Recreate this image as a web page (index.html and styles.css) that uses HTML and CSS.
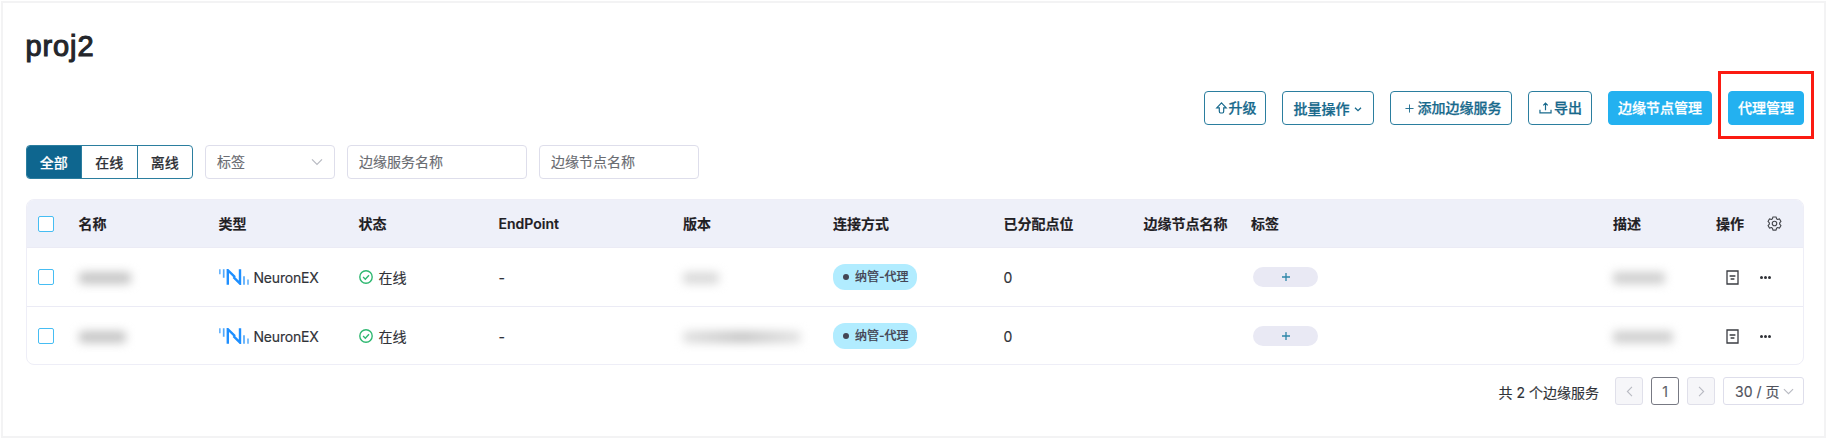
FILE: index.html
```html
<!DOCTYPE html>
<html lang="zh-CN">
<head>
<meta charset="utf-8">
<title>proj2</title>
<link rel="stylesheet" href="styles.css">
</head>
<body>
<svg class="defs" width="0" height="0">
  <symbol id="chevron" viewBox="0 0 12 12"><path d="M1 3.300l5 5 5-5" fill="none" stroke="currentColor" stroke-width="1.200"/></symbol>
  <symbol id="neuron" viewBox="0 0 30 16">
    <g fill="none" stroke-width="1.700">
      <path d="M.8.3v4.900" stroke="#6bb5fb"/><path d="M4.700.3v8.500" stroke="#52a9fb"/>
      <path d="M25 7.200v8.500" stroke="#52a9fb"/><path d="M29 10.600v5.100" stroke="#6bb5fb"/>
      <path d="M8.800 15.700V1.200l7.200 7" stroke="#1e8fff" stroke-width="2.400"/>
      <path d="M21 .3v14.300l-6.500-6.400" stroke="#1e8fff" stroke-width="2.400"/>
    </g>
  </symbol>
  <symbol id="check" viewBox="0 0 14 14"><g fill="none" stroke="#2fb871" stroke-width="1.400"><circle cx="7" cy="7" r="6.200"/><path d="M4.100 7.100l2.200 2.100 3.700-4"/></g></symbol>
  <symbol id="doc" viewBox="0 0 13 15"><path d="M1 1h11v13H1zM3.600 6h5.800M4.600 9h3.800" fill="none" stroke="#3a3c42" stroke-width="1.300"/></symbol>
</svg>
<main class="page">
  <h1 class="title">proj2</h1>
  <div class="toolbar">
    <button class="btn upgrade"><svg class="i-up" viewBox="0 0 11 12"><path d="M5.500.8L10.200 5.800H7.700v3.500q0 1.700-1.200 1.700h-2q-1.200 0-1.200-1.700V5.800H.8z" fill="none" stroke="currentColor" stroke-width="1.200"/></svg>升级</button>
    <button class="btn low">批量操作<svg class="i-down" viewBox="0 0 12 12"><path d="M3 4.800L6 7.700l3-2.900" fill="none" stroke="currentColor" stroke-width="1.300"/></svg></button>
    <button class="btn"><svg class="i-plus" viewBox="0 0 10 10"><path d="M5 .5v9M.5 5h9" stroke="currentColor"/></svg>添加边缘服务</button>
    <button class="btn"><svg class="i-export" viewBox="0 0 14 13"><path d="M1 8.300v3.500h12V8.300M7 9V1.500M4.600 3.700L7 1.300l2.400 2.400" fill="none" stroke="currentColor" stroke-width="1.300"/></svg>导出</button>
    <button class="btn primary">边缘节点管理</button>
    <button class="btn primary marked">代理管理</button>
  </div>
  <div class="filters">
    <div class="segment"><span class="on">全部</span><span>在线</span><span>离线</span></div>
    <div class="field tag-select">标签<svg class="i-arrow"><use href="#chevron"/></svg></div>
    <div class="field service">边缘服务名称</div>
    <div class="field node">边缘节点名称</div>
  </div>
  <section class="table">
    <div class="row head">
      <div><i class="box"></i></div><div>名称</div><div>类型</div><div>状态</div><div>EndPoint</div><div>版本</div><div>连接方式</div><div>已分配点位</div><div>边缘节点名称</div><div>标签</div><div>描述</div>
      <div>操作<svg class="i-gear" viewBox="0 0 16 16"><g fill="none" stroke="#45474d" stroke-width="1.200"><path d="M6.300 1h3.400l.5 2 1.100.7 2.100-.6 1.500 2.700-1.400 1.500v1.400l1.400 1.500-1.500 2.700-2.100-.6-1.100.7-.5 2H6.300l-.5-2-1.100-.7-2.100.6-1.500-2.700 1.400-1.500V7.300L1.100 5.800l1.500-2.700 2.100.6L5.800 3z" stroke-linejoin="round"/><circle cx="8" cy="8" r="2.400"/></g></svg></div>
    </div>
    <div class="row">
      <div><i class="box"></i></div><div><i class="mask name1"></i></div>
      <div><svg class="i-neuron"><use href="#neuron"/></svg><span class="product">NeuronEX</span></div>
      <div><svg class="i-check"><use href="#check"/></svg><span class="state">在线</span></div>
      <div>-</div><div><i class="mask ver1"></i></div><div><span class="badge">纳管-代理</span></div><div>0</div><div></div>
      <div><span class="add"><svg viewBox="0 0 8 8"><path d="M4 0v8M0 4h8"/></svg></span></div><div><i class="mask desc1"></i></div>
      <div><svg class="i-doc"><use href="#doc"/></svg><span class="more"><i></i><i></i><i></i></span></div>
    </div>
    <div class="row">
      <div><i class="box"></i></div><div><i class="mask name2"></i></div>
      <div><svg class="i-neuron"><use href="#neuron"/></svg><span class="product">NeuronEX</span></div>
      <div><svg class="i-check"><use href="#check"/></svg><span class="state">在线</span></div>
      <div>-</div><div><i class="mask ver2"></i></div><div><span class="badge">纳管-代理</span></div><div>0</div><div></div>
      <div><span class="add"><svg viewBox="0 0 8 8"><path d="M4 0v8M0 4h8"/></svg></span></div><div><i class="mask desc2"></i></div>
      <div><svg class="i-doc"><use href="#doc"/></svg><span class="more"><i></i><i></i><i></i></span></div>
    </div>
  </section>
  <footer class="pager">
    <span class="total">共 2 个边缘服务</span>
    <span class="pg off"><svg class="prev"><use href="#chevron"/></svg></span>
    <span class="pg current">1</span>
    <span class="pg off"><svg class="next"><use href="#chevron"/></svg></span>
    <span class="size">30 / 页<svg><use href="#chevron"/></svg></span>
  </footer>
</main>
</body>
</html>
```
FILE: styles.css
```css
* { box-sizing: border-box; }
body {
  margin: 0;
  padding: 1px 1px 2px;
  height: 439px;
  overflow: hidden;
  background: #fff;
  font: 14px/20px Inter, "Noto Sans CJK SC", sans-serif;
  color: #303238;
  -webkit-text-stroke: .15px currentColor;
}
.defs { position: absolute; }
svg { flex: none; overflow: visible; }
.page {
  height: 437px;
  border: 2px solid #f3f3f4;
  padding: 0 20px 0 22.500px;
}
.title {
  margin: 0;
  padding-top: 23px;
  height: 88px;
  font: 400 29px/40px "Liberation Sans", sans-serif;
  -webkit-text-stroke: 1.100px currentColor;
  letter-spacing: .9px;
  color: #24262b;
}
.toolbar { display: flex; justify-content: flex-end; gap: 16px; height: 34px; }
.btn {
  display: flex;
  align-items: center;
  height: 34px;
  padding: 0 9px 0 10.500px;
  border: 1px solid #2b7e9f;
  border-radius: 4px;
  background: #fff;
  color: #17698c;
  font: 500 14px/20px Inter, "Noto Sans CJK SC", sans-serif;
  -webkit-text-stroke: .25px currentColor;
  white-space: nowrap;
}
.btn.upgrade { width: 62px; }
.btn.low { width: 92px; padding: 1px 0 0 10.500px; }
.btn.primary { padding: 0 9px; border-color: #23b1f0; background: #23b1f0; color: #fff; }
.marked { position: relative; }
.marked::after { content: ""; position: absolute; inset: -21px -11px -15px; border: 3px solid #fb1b12; }
.i-up { width: 11px; height: 12px; margin: 0 2px 0 0; }
.i-down { width: 12px; height: 12px; margin-left: 2px; }
.i-plus { width: 9px; height: 9px; margin: 0 4px 0 3px; }
.i-export { width: 13px; height: 12px; margin-right: 2px; }
.filters { display: flex; gap: 12px; margin-top: 20px; height: 34px; }
.segment {
  display: flex;
  width: 167.500px;
  border: 1px solid #2b7e9f;
  border-radius: 4px;
  overflow: hidden;
  font-weight: 500;
}
.segment span { flex: 1; text-align: center; line-height: 33px; border-left: 1px solid #2b7e9f; }
.segment .on { border-left: 0; background: #0e668f; color: #fff; }
.field {
  display: flex;
  align-items: center;
  justify-content: space-between;
  padding: 0 11px;
  border: 1px solid #dedeeb;
  border-radius: 4px;
  color: #6a6c72;
}
.tag-select { width: 130px; }
.service { width: 180px; }
.node { width: 160px; }
.i-arrow { width: 12px; height: 12px; color: #b8bac2; }
.table {
  margin-top: 20px;
  height: 166px;
  border: 1px solid #eeeef7;
  border-radius: 8px;
  overflow: hidden;
}
.row {
  display: grid;
  grid-template-columns: 52px 140px 140px 140px 184.500px 150px 170.500px 140px 107.500px 362px 103px 1fr;
  height: 59px;
  border-top: 1px solid #ebebf5;
}
.row > div { display: flex; align-items: center; padding-top: 1px; white-space: nowrap; }
.row > div:first-child { padding: 0 0 0 11.500px; }
.row.head { height: 47px; border-top: 0; background: #eef0f9; color: #1f2024; font-weight: 600; }
.box { width: 16px; height: 16px; border: 1px solid #46bdf3; border-radius: 2px; background: #fff; }
.i-gear { width: 15px; height: 15px; margin: 0 0 2px 23px; }
.i-neuron { width: 30px; height: 16px; margin: 0 5px 1px 0; }
.product { letter-spacing: -.200px; }
.i-check { width: 14px; height: 14px; margin: 0 6px 1px 0; }
.state { padding-top: 1px; }
.badge {
  display: flex;
  align-items: center;
  gap: 6px;
  width: 84px;
  height: 26px;
  margin-bottom: 1px;
  padding-left: 10px;
  border-radius: 12px;
  background: #b1ecff;
  font-size: 12px;
  font-weight: 500;
  color: #444554;
}
.badge::before { content: ""; width: 6px; height: 6px; border-radius: 50%; background: #444554; }
.add { display: grid; place-items: center; width: 65px; height: 20px; margin: 0 0 1px 2px; border-radius: 10px; background: #e9e9f4; }
.add svg { width: 8px; height: 8px; stroke: #2d86a8; stroke-width: 1.300; }
.mask { height: 12px; border-radius: 4px; background: #c6c6c6; filter: blur(5px); }
.name1 { width: 52px; }
.name2 { width: 47px; }
.ver1 { width: 36px; background: #dadada; }
.ver2 { width: 118px; background: linear-gradient(90deg, #e0e0e0, #c6c6c6 50%, #e4e4e4); }
.desc1 { width: 52px; background: #cfcfcf; }
.desc2 { width: 60px; background: #cfcfcf; }
.i-doc { width: 13px; height: 15px; margin: 0 21px 1px 10px; }
.more { display: flex; gap: 1px; margin-bottom: 1px; }
.more i { width: 3px; height: 3px; border-radius: 50%; background: #303238; }
.pager { display: flex; justify-content: flex-end; align-items: center; gap: 8px; margin-top: 12px; height: 28px; }
.total { margin-right: 8px; padding-top: 3px; }
.pg { display: grid; place-items: center; width: 28px; height: 28px; padding-top: 1px; border: 1px solid #e0e0ea; border-radius: 3px; color: #5d5f68; }
.off { padding: 0; background: #f6f6f9; color: #b8bac2; }
.pg svg { width: 11px; height: 11px; }
.prev { transform: rotate(90deg); }
.next { transform: rotate(-90deg); }
.current { border-color: #777983; }
.size { display: flex; align-items: center; gap: 4px; width: 81px; height: 28px; padding: 2px 0 0 11px; border: 1px solid #dedeeb; border-radius: 3px; color: #50525c; white-space: nowrap; }
.size svg { width: 11px; height: 11px; margin-bottom: 2px; color: #b8bac2; }
```
